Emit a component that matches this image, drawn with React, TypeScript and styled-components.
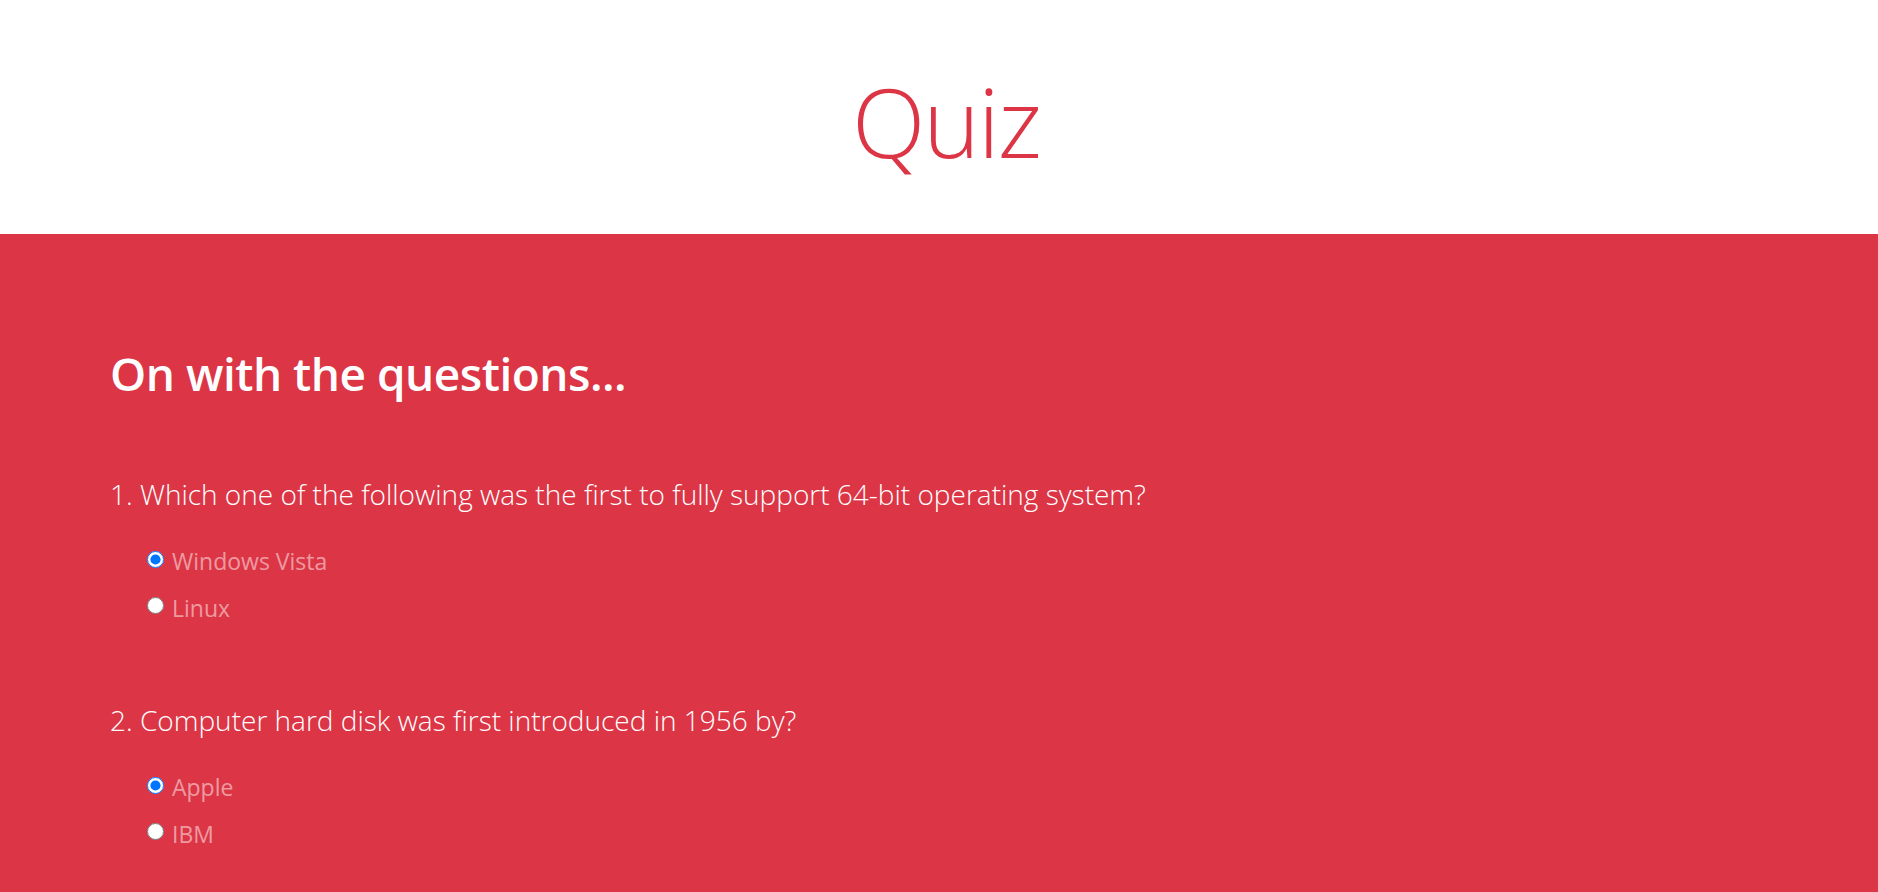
import React from "react";
import styled, { createGlobalStyle } from "styled-components";

const Global = createGlobalStyle`
  html, body { margin: 0; padding: 0; background: #ffffff; }
  body { font-family: "Open Sans", "Noto Sans", sans-serif; }
  * { box-sizing: border-box; }
`;

const Header = styled.header`
  height: 234px;
  display: flex;
  justify-content: center;
  padding-top: 63px;
  padding-left: 14px;
`;

const Title = styled.h1`
  margin: 0;
  font-size: 96px;
  font-weight: 300;
  line-height: 1.2;
  color: #dc3545;
  letter-spacing: -2px;
`;

const Section = styled.main`
  background: #dc3545;
  min-height: 658px;
  padding: 112px 110px 60px;
  color: #ffffff;
`;

const Heading = styled.h2`
  margin: 0 0 72px;
  font-size: 46px;
  font-weight: 600;
  line-height: 1.2;
  letter-spacing: -0.5px;
`;

const QuestionList = styled.div`
  display: flex;
  flex-direction: column;
  gap: 74px;
`;

const Question = styled.fieldset`
  margin: 0;
  padding: 0;
  border: 0;
  display: flex;
  flex-direction: column;
`;

const Prompt = styled.legend`
  padding: 0;
  font-size: 28px;
  font-weight: 300;
  line-height: 1.5;
  margin-bottom: 29px;
`;

const Options = styled.div`
  display: flex;
  flex-direction: column;
  gap: 12px;
  padding-left: 37px;
`;

const Option = styled.label`
  display: flex;
  align-items: center;
  gap: 8px;
  font-size: 23px;
  line-height: 1.5;
  color: rgba(255, 255, 255, 0.5);
  cursor: pointer;
`;

const Radio = styled.input`
  margin: 0;
  width: 17px;
  height: 17px;
  position: relative;
  top: -2px;
`;

const questions = [
  {
    id: "q1",
    text: "1. Which one of the following was the first to fully support 64-bit operating system?",
    options: ["Windows Vista", "Linux"],
  },
  {
    id: "q2",
    text: "2. Computer hard disk was first introduced in 1956 by?",
    options: ["Apple", "IBM"],
  },
];

export default function App() {
  return (
    <>
      <Global />
      <Header>
        <Title>Quiz</Title>
      </Header>
      <Section>
        <Heading>On with the questions...</Heading>
        <QuestionList>
          {questions.map((q) => (
            <Question key={q.id}>
              <Prompt>{q.text}</Prompt>
              <Options>
                {q.options.map((o, i) => (
                  <Option key={o}>
                    <Radio type="radio" name={q.id} defaultChecked={i === 0} />
                    {o}
                  </Option>
                ))}
              </Options>
            </Question>
          ))}
        </QuestionList>
      </Section>
    </>
  );
}
